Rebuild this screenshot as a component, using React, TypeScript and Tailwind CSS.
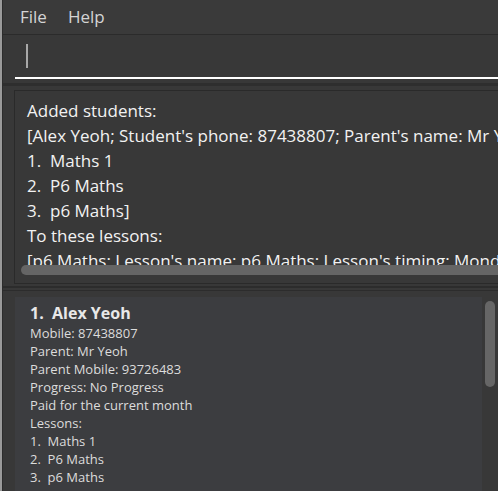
import React from "react";

const resultLines = [
  "Added students:",
  "[Alex Yeoh; Student's phone: 87438807; Parent's name: Mr Yeoh; Parent's phone: 93726483",
  "1.  Maths 1",
  "2.  P6 Maths",
  "3.  p6 Maths]",
  "To these lessons:",
  "[p6 Maths; Lesson's name: p6 Maths; Lesson's timing: Monday 10:00-12:00",
];

const details = [
  "Mobile: 87438807",
  "Parent: Mr Yeoh",
  "Parent Mobile: 93726483",
  "Progress: No Progress",
  "Paid for the current month",
  "Lessons:",
  "1.  Maths 1",
  "2.  P6 Maths",
  "3.  p6 Maths",
];

export default function App() {
  return (
    <div
      className="flex h-[491px] w-[498px] overflow-hidden bg-[#383838]"
      style={{ fontFamily: '"Open Sans", "Noto Sans", sans-serif' }}
    >
      {/* left window edge */}
      <div className="w-[2px] shrink-0 bg-[#9a9a9a]" />
      <div className="w-px shrink-0 bg-[#2c2c2c]" />

      <div className="flex min-w-0 flex-1 flex-col">
        {/* menu bar */}
        <div className="flex h-[35px] shrink-0 items-center gap-[21px] border-b border-[#2b2b2b] bg-[#3a3a3a] pl-[17px] text-[17px] text-[#d4d4d4]">
          <span>File</span>
          <span>Help</span>
        </div>

        {/* command box */}
        <div className="flex h-[44px] shrink-0 flex-col pl-[12px]">
          <div className="flex flex-1 items-center pl-[11px]">
            <div className="h-[24px] w-[2px] bg-[#a8a8a8]" />
          </div>
          <div className="h-[2px] bg-white" />
        </div>

        <div className="mt-[4px] h-[3px] shrink-0 bg-[#2e2e2e]" />

        {/* result display */}
        <div className="ml-[11px] mt-[4px] flex h-[194px] shrink-0 flex-col overflow-hidden border border-r-0 border-[#2a2a2a] bg-[#383838]">
          <div className="flex-1 overflow-hidden pl-[12px] pt-[7px] text-[17px] leading-[25px] text-[#f2f2f2]">
            {resultLines.map((l, i) => (
              <div key={i} className="whitespace-pre">{l}</div>
            ))}
          </div>
          <div className="mb-[8px] ml-[6px] h-[10px] shrink-0 rounded-l-full bg-[#656565]" />
        </div>

        <div className="mt-[2px] h-[2px] shrink-0 bg-[#2c2c2c]" />
        <div className="mt-[2px] h-px shrink-0 bg-[#2c2c2c]" />

        {/* person list */}
        <div className="flex flex-1 pl-[12px] pt-[6px]">
          <div className="flex-1 bg-[#3c3d40] pl-[15px] pt-[5px] text-[#dcdcdc]">
            <div className="text-[16px] font-bold leading-[22px] text-[#e8e8e8]">1.&nbsp;&nbsp;Alex Yeoh</div>
            <div className="text-[13px] leading-[18px]">
              {details.map((d, i) => (
                <div key={i} className="whitespace-pre">{d}</div>
              ))}
            </div>
          </div>
          <div className="w-[16px] shrink-0 pl-[3px] pt-[4px]">
            <div className="h-[86px] w-[10px] rounded-full bg-[#666666]" />
          </div>
        </div>
      </div>
    </div>
  );
}
